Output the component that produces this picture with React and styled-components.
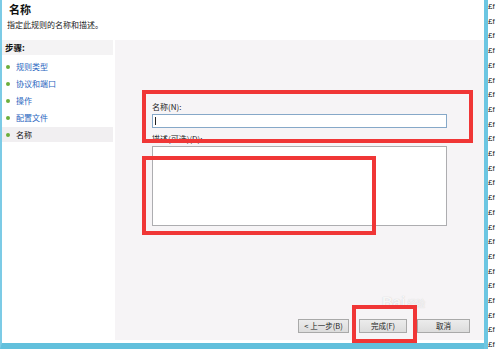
import React from "react";
import styled, { createGlobalStyle } from "styled-components";

const Global = createGlobalStyle`
  html, body { margin: 0; padding: 0; background: #fff; }
  body { font-family: "Noto Sans CJK SC", "Noto Sans", sans-serif; }
`;

const Page = styled.div`
  display: flex;
  width: 497px;
  height: 349px;
  overflow: hidden;
  position: relative;
`;

const Window = styled.div`
  width: 482px;
  height: 343px;
  display: flex;
  flex-direction: column;
  border-left: 2px solid #7ccbe6;
  border-bottom: 6px solid #62c0dc;
  background: #fff;
`;

const Header = styled.div`
  height: 40px;
  box-sizing: border-box;
  padding: 2px 0 0 5px;
  display: flex;
  flex-direction: column;
`;

const Title = styled.div`
  font-size: 11px;
  font-weight: 700;
  line-height: 14px;
  color: #111;
  padding-left: 2px;
`;

const Subtitle = styled.div`
  margin-top: 3px;
  font-size: 8px;
  line-height: 11px;
  color: #222;
`;

const Body = styled.div`
  flex: 1;
  display: flex;
  margin-bottom: 3px;
`;

const Sidebar = styled.div`
  width: 113px;
  display: flex;
  flex-direction: column;
  background: #fff;
`;

const StepsHeader = styled.div`
  height: 15px;
  margin-right: 2px;
  background: #f4f3f4;
  padding-left: 3px;
  font-size: 8.5px;
  font-weight: 700;
  line-height: 15px;
  color: #111;
  margin-bottom: 3px;
`;

const Step = styled.div`
  height: 15px;
  margin: 1px 2px 1px 0;
  display: flex;
  align-items: center;
  gap: 6px;
  padding-left: 4px;
  font-size: 8px;
  color: ${(p) => (p.$current ? "#111" : "#2a66c0")};
  background: ${(p) => (p.$current ? "#f1eff1" : "transparent")};
`;

const Dot = styled.span`
  width: 4px;
  height: 4px;
  border-radius: 50%;
  background: #6cae3c;
  flex: none;
`;

const Main = styled.div`
  flex: 1;
  background: #f6f4f6;
  display: flex;
  flex-direction: column;
  padding: 62px 14px 7px 37px;
`;

const Label = styled.div`
  font-size: 8px;
  line-height: 10px;
  color: #222;
  margin-bottom: 2px;
`;

const Input = styled.div`
  width: 295px;
  height: 14px;
  box-sizing: border-box;
  border: 1px solid #86a8c8;
  background: #fff;
  margin-bottom: 6px;
  display: flex;
  align-items: center;
  padding-left: 2px;
`;

const Caret = styled.span`
  width: 1px;
  height: 8px;
  background: #222;
`;

const TextArea = styled.div`
  width: 295px;
  height: 80px;
  box-sizing: border-box;
  border: 1px solid #adadb0;
  background: #fff;
`;

const Buttons = styled.div`
  margin-top: auto;
  display: flex;
  justify-content: flex-end;
  gap: 10px;
`;

const Button = styled.div`
  width: ${(p) => p.$w}px;
  height: 14px;
  box-sizing: border-box;
  border: 1px solid #a9a9a9;
  background: linear-gradient(#ececec, #dcdcdc);
  font-size: 7.5px;
  line-height: 12px;
  text-align: center;
  color: #222;
`;

const RightBar = styled.div`
  width: 4px;
  height: 349px;
  background: #6cc6e2;
`;

const RightText = styled.div`
  width: 9px;
  height: 349px;
  overflow: hidden;
  display: flex;
  flex-direction: column;
  font-family: "Liberation Sans", sans-serif;
  font-size: 8px;
  line-height: 14.7px;
  color: #222;
  white-space: nowrap;
`;

const RedBox = styled.div`
  position: absolute;
  box-sizing: border-box;
  border: 4px solid #f03636;
  left: ${(p) => p.$x}px;
  top: ${(p) => p.$y}px;
  width: ${(p) => p.$w}px;
  height: ${(p) => p.$h}px;
  pointer-events: none;
`;

const Watermark = styled.div`
  position: absolute;
  left: 382px;
  top: 294px;
  display: flex;
  align-items: flex-end;
  gap: 2px;
  color: rgba(255, 255, 255, 0.85);
  text-shadow: 0 0 1px rgba(160, 160, 160, 0.6);
  pointer-events: none;
`;

const WmBig = styled.span`
  font-family: "Liberation Sans", sans-serif;
  font-size: 15px;
  font-weight: 700;
  line-height: 16px;
`;

const WmSmall = styled.span`
  font-size: 9px;
  line-height: 12px;
`;

const steps = ["规则类型", "协议和端口", "操作", "配置文件", "名称"];

export default function App() {
  return (
    <>
      <Global />
      <Page>
        <Window>
          <Header>
            <Title>名称</Title>
            <Subtitle>指定此规则的名称和描述。</Subtitle>
          </Header>
          <Body>
            <Sidebar>
              <StepsHeader>步骤:</StepsHeader>
              {steps.map((s, i) => (
                <Step key={s} $current={i === steps.length - 1}>
                  <Dot />
                  {s}
                </Step>
              ))}
            </Sidebar>
            <Main>
              <Label>名称(N):</Label>
              <Input>
                <Caret />
              </Input>
              <Label>描述(可选)(D):</Label>
              <TextArea />
              <Buttons>
                <Button $w={51}>&lt; 上一步(B)</Button>
                <Button $w={48}>完成(F)</Button>
                <Button $w={53}>取消</Button>
              </Buttons>
            </Main>
          </Body>
        </Window>
        <RightBar />
        <RightText>
          {Array.from({ length: 24 }).map((_, i) => (
            <span key={i}>£f</span>
          ))}
        </RightText>
        <Watermark>
          <WmBig>Bai</WmBig>
          <WmSmall>经验</WmSmall>
        </Watermark>
        <RedBox $x={142} $y={90} $w={331} $h={53} />
        <RedBox $x={142} $y={156} $w={234} $h={79} />
        <RedBox $x={352} $y={305} $w={65} $h={38} />
      </Page>
    </>
  );
}
